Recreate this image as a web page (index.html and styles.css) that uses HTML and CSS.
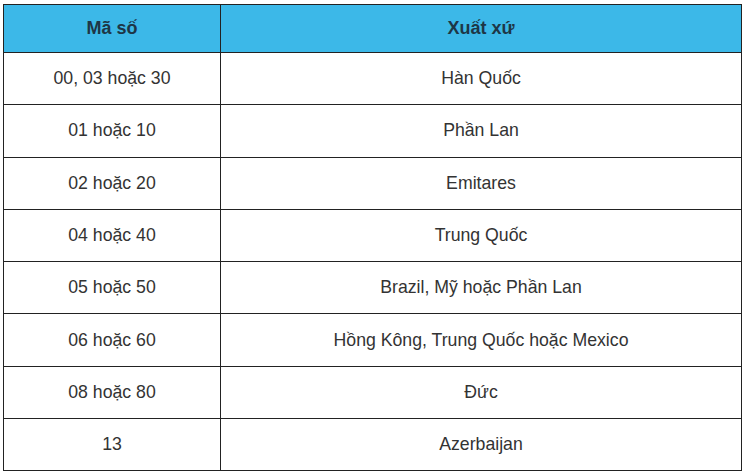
FILE: index.html
```html
<!DOCTYPE html>
<html lang="vi">
<head>
<meta charset="utf-8">
<link rel="stylesheet" href="styles.css">
</head>
<body>
<table class="codes">
  <thead>
    <tr><th class="col-code">Mã số</th><th>Xuất xứ</th></tr>
  </thead>
  <tbody>
    <tr><td>00, 03 hoặc 30</td><td>Hàn Quốc</td></tr>
    <tr><td>01 hoặc 10</td><td>Phần Lan</td></tr>
    <tr><td>02 hoặc 20</td><td>Emitares</td></tr>
    <tr><td>04 hoặc 40</td><td>Trung Quốc</td></tr>
    <tr><td>05 hoặc 50</td><td>Brazil, Mỹ hoặc Phần Lan</td></tr>
    <tr><td>06 hoặc 60</td><td>Hồng Kông, Trung Quốc hoặc Mexico</td></tr>
    <tr><td>08 hoặc 80</td><td>Đức</td></tr>
    <tr><td>13</td><td>Azerbaijan</td></tr>
  </tbody>
</table>
</body>
</html>
```
FILE: styles.css
```css
html, body {
  margin: 0;
  padding: 0;
  background: #fff;
}
body {
  padding: 4px 0 0 3px;
  font-family: "Liberation Sans", Arial, sans-serif;
}
.codes {
  width: 739px;
  border-collapse: collapse;
  table-layout: fixed;
  font-size: 17.7px;
  color: #333;
}
.codes th,
.codes td {
  border: 1px solid #222;
  text-align: center;
  padding: 0;
}
.codes th {
  background: #3cb8e8;
  color: #1e3646;
  font-weight: bold;
  font-size: 18px;
  height: 47px;
}
.codes td {
  height: 51.3px;
}
.col-code {
  width: 216px;
}
```
